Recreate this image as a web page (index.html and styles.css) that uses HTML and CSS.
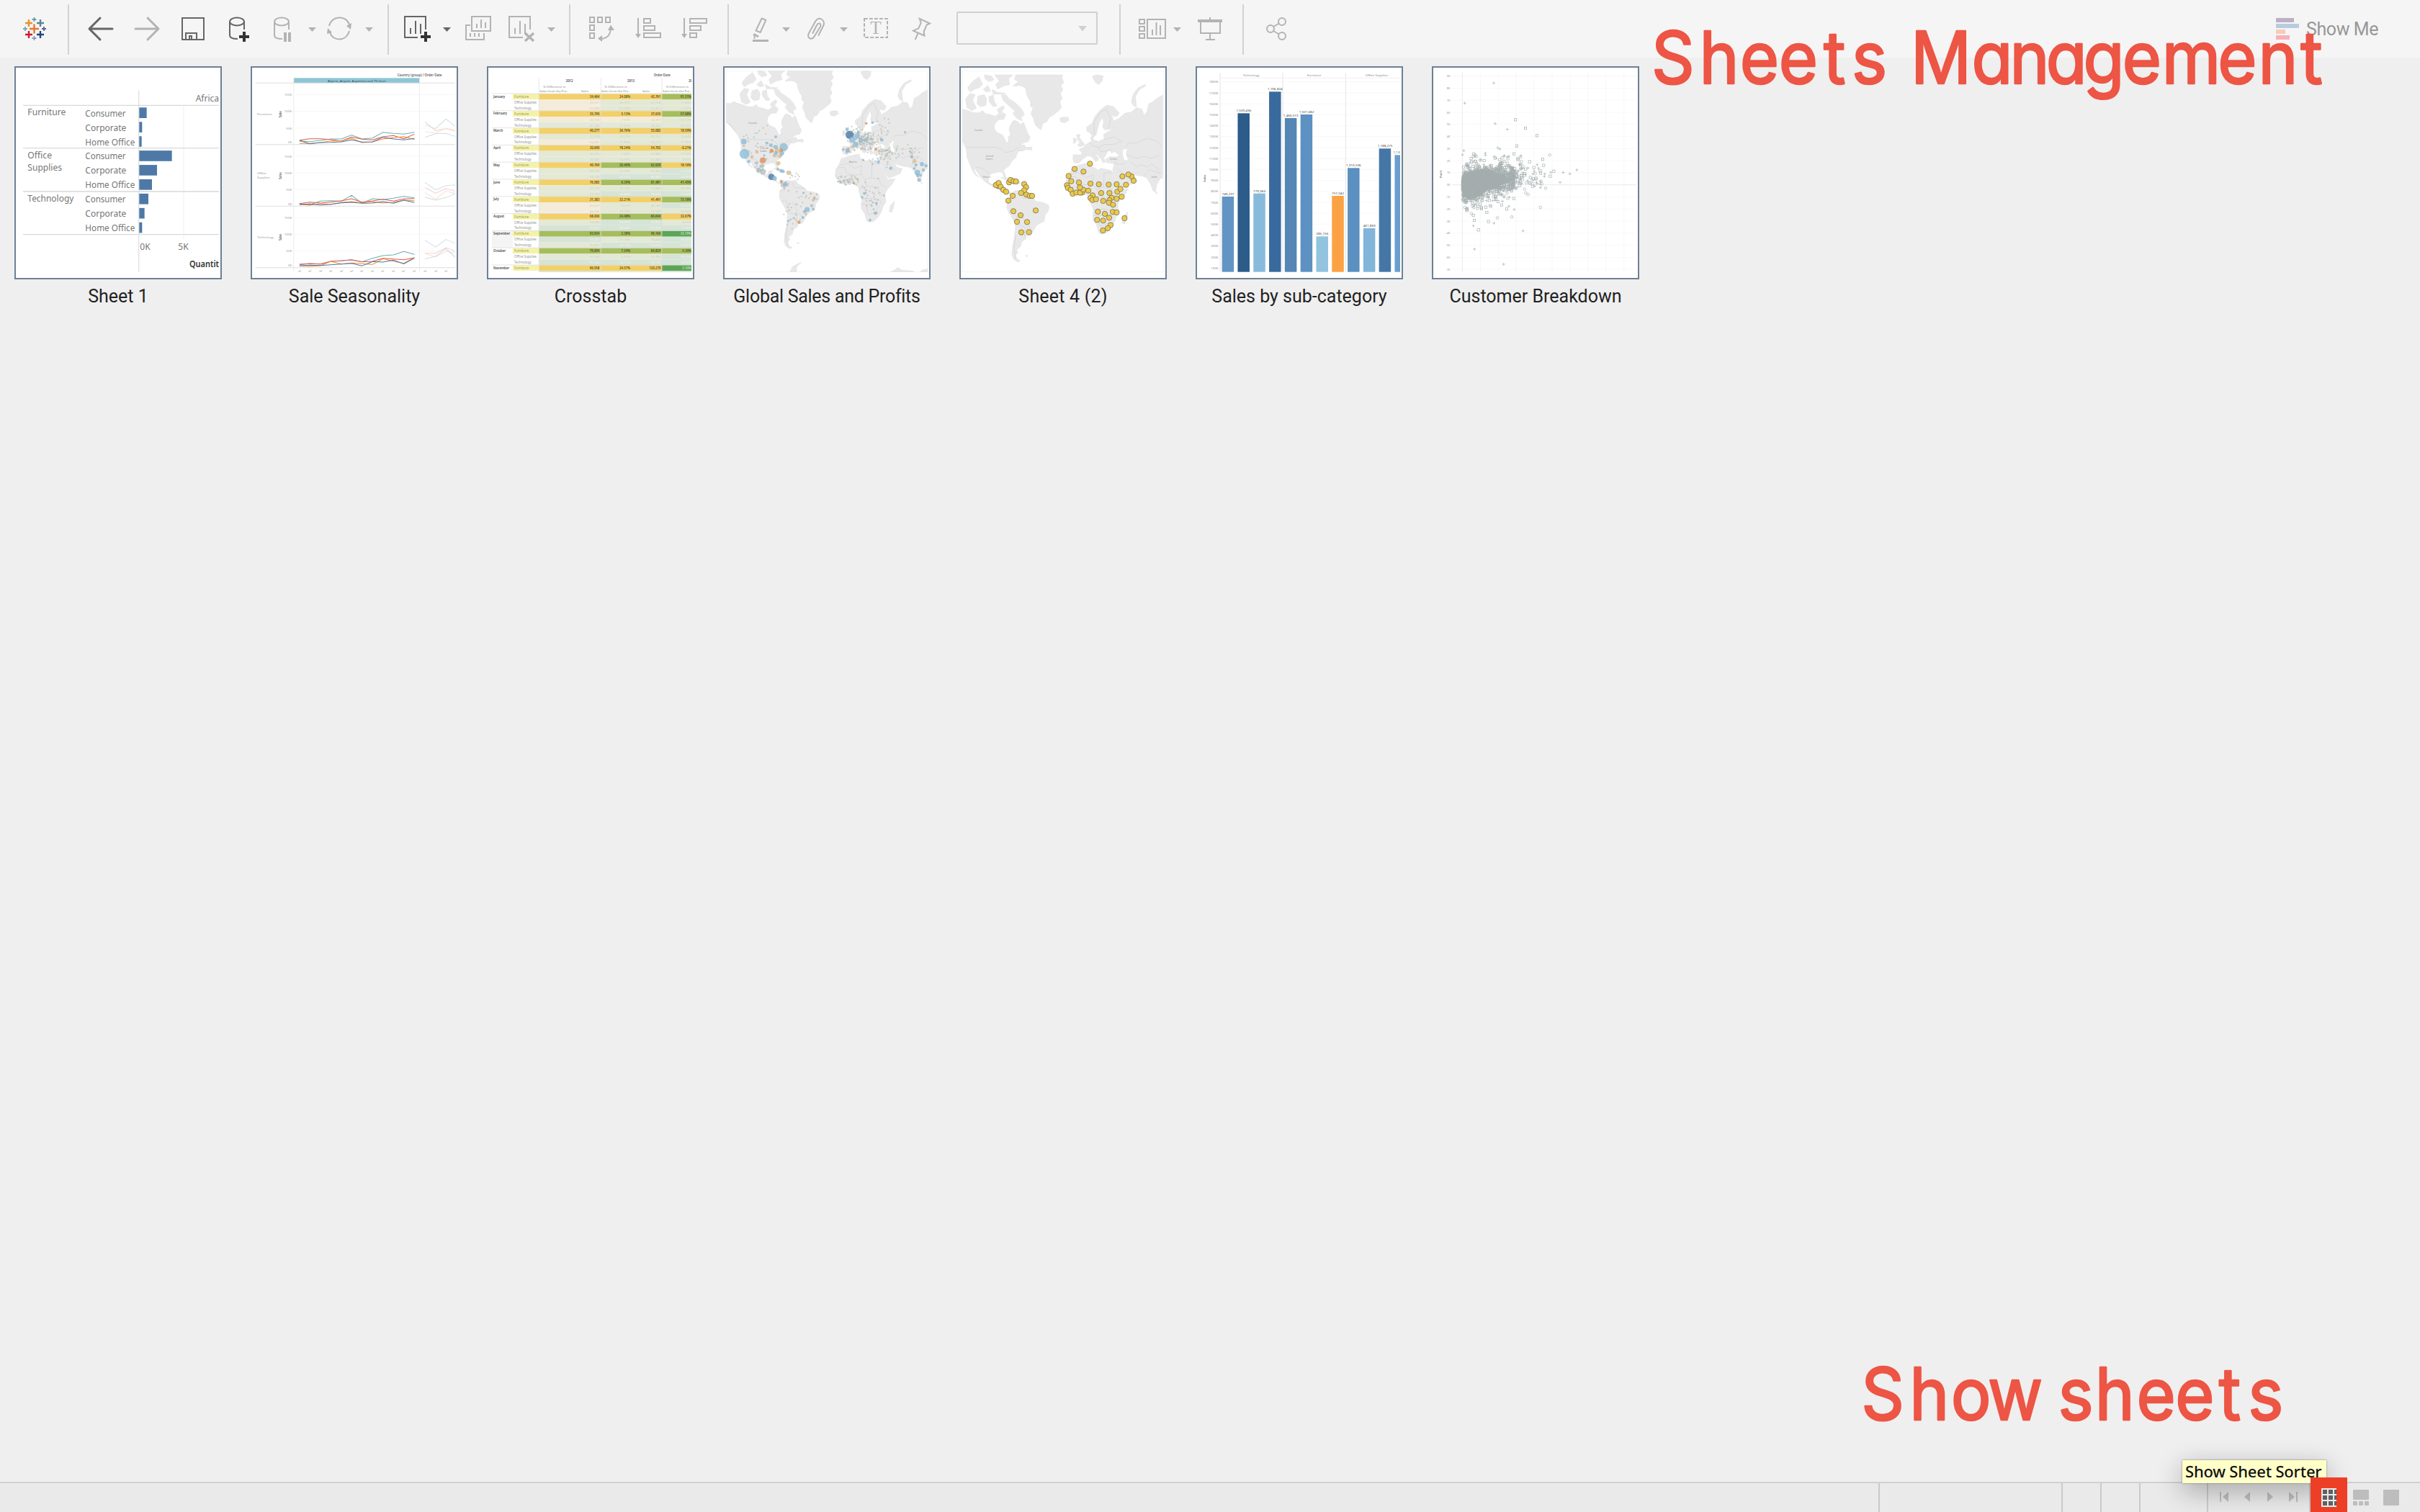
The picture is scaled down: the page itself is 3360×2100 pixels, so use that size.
FILE: index.html
```html
<!DOCTYPE html>
<html lang="en">
<head>
<meta charset="utf-8">
<title>Sheets Management</title>
<link rel="stylesheet" href="styles.css">
</head>
<body>
<div class="app">
  <header class="toolbar">
    <svg class="icon" width="34" height="80"><g fill="none" stroke-width="2.4"><path stroke="#e8762c" d="M9 40H22M15.500 33.500V46.500"/><path stroke="#e8912d" d="M3 32H13M8 27V37"/><path stroke="#59879b" d="M19 32H29M24 27V37"/><path stroke="#c72035" d="M3 48H13M8 43V53"/><path stroke="#1f457e" d="M19 48H29M24 43V53"/><g stroke-width="1.800"><path stroke="#6f9ba8" d="M12.500 27H18.500M15.500 24V30"/><path stroke="#9297ba" d="M12.500 53H18.500M15.500 50V56"/><path stroke="#7ba6b5" d="M0 40H6M3 37V43"/><path stroke="#5b6591" d="M26 40H32M29 37V43"/></g></g></svg>
    <span class="sep"></span>
    <svg class="icon dark round" width="40" height="80"><path stroke-width="3" d="M34 40H2M17 25L2 40L17 55"/></svg>
    <svg class="icon round" width="40" height="80"><path stroke-width="3" d="M2 40H34M19 25L34 40L19 55"/></svg>
    <svg class="icon dark" width="40" height="80"><path d="M1 25H31V55H1ZM6 55V46H21V55M11 55V50H14V55"/></svg>
    <svg class="icon dark" width="40" height="80"><path d="M21 41V30M1 30V49C1 53 7 54 12 54"/><ellipse cx="11" cy="30" rx="10" ry="5.500"/><path class="plus" d="M14 51H28M21 44V58"/></svg>
    <svg class="icon" width="40" height="80"><path d="M21 41V30M1 30V49C1 53 7 54 12 54"/><ellipse cx="11" cy="30" rx="10" ry="5.500"/><path stroke-width="4" d="M16 45V58M22 45V58"/></svg>
    <svg class="icon" width="12" height="80"><path class="solid" d="M0 38H11L5.500 44Z"/></svg>
    <svg class="icon" width="40" height="80"><path d="M3 36C6 22 26 20 31 34M4 45C8 58 27 58 31 43"/><path class="solid" d="M27 36L34 32L33 41ZM1 39L0 47L7 45Z"/></svg>
    <svg class="icon" width="12" height="80"><path class="solid" d="M0 38H11L5.500 44Z"/></svg>
    <span class="sep"></span>
    <svg class="icon dark" width="40" height="80"><path d="M30 41V23H1V52H19M9 39V47M16 29V47M23 33V47"/><path class="plus" d="M23 51H37M30 44V58"/></svg>
    <svg class="icon dark" width="12" height="80"><path class="solid" d="M0 38H11L5.500 44Z"/></svg>
    <svg class="icon" width="40" height="80"><path d="M9 23H35V43H9ZM7 35H1V55H26V46M16 33V39M22 27V39M28 31V39M7 46V51M13 46V51M19 46V51"/></svg>
    <svg class="icon" width="40" height="80"><path d="M30 41V23H1V52H20M9 39V47M16 29V47M23 33V47"/><path stroke-width="3.500" d="M23 46L35 57M35 46L23 57"/></svg>
    <svg class="icon" width="12" height="80"><path class="solid" d="M0 38H11L5.500 44Z"/></svg>
    <span class="sep"></span>
    <svg class="icon" width="40" height="80"><path d="M2 24H8V31H2ZM13 24H19V31H13ZM24 24H30V31H24ZM2 35H8V42H2ZM2 46H8V53H2Z"/><path d="M31 40C30 49 27 52 19 54"/><path class="solid" d="M31 34.500L36 42H27ZM13 53.500L19 49V58Z"/></svg>
    <svg class="icon" width="40" height="80"><path d="M4 25V50M12 26H21V32H12ZM12 36H27V42H12ZM12 46H35V52H12Z"/><path class="solid" d="M0 47H8L4 53Z"/></svg>
    <svg class="icon" width="40" height="80"><path d="M4 25V50M12 26H35V32H12ZM12 36H27V42H12ZM12 46H21V52H12Z"/><path class="solid" d="M0 47H8L4 53Z"/></svg>
    <span class="sep"></span>
    <svg class="icon round" width="26" height="80"><path d="M13.700 25.500L19.300 28L11.700 45L5.500 42.500Z"/><path class="solid" d="M3 46L10 50L8 52L4 50L5 53L2 54L3 51L1.500 49Z"/><path class="solid" d="M1 55H23V58H1Z"/></svg>
    <svg class="icon" width="12" height="80"><path class="solid" d="M0 38H11L5.500 44Z"/></svg>
    <svg class="icon round" width="28" height="80"><path d="M15.500 49L22.500 35C25 28 16 22 11.500 29L2 46C-1 53 6 57 10 50L18 37C20 32 15 31 13 35L7.500 46"/></svg>
    <svg class="icon" width="12" height="80"><path class="solid" d="M0 38H11L5.500 44Z"/></svg>
    <svg class="icon" width="36" height="80"><rect x="1" y="26" width="32" height="26" stroke-dasharray="4.800 2.200"/><text class="glyph" x="16.800" y="47" text-anchor="middle">T</text></svg>
    <svg class="icon" width="30" height="80"><path d="M10.700 26L25 32.500L20.700 34.500L16.700 44L17.500 49.500L2 42.700L9.300 39.300L12.700 31.700ZM8.300 46.700L4.700 55"/></svg>
    <div class="combo"><svg class="icon" width="14" height="8"><path class="solid faint" d="M0 0H12L6 7.500Z"/></svg></div>
    <span class="sep"></span>
    <svg class="icon" width="42" height="80"><path d="M2 27H9V33H2ZM2 37H9V43H2ZM2 47H9V53H2ZM13 27H38V53H13ZM20 41V49M25.500 31V49M31 35V49"/></svg>
    <svg class="icon" width="12" height="80"><path class="solid" d="M0 38H11L5.500 44Z"/></svg>
    <svg class="icon" width="36" height="80"><path d="M4 30V46H31V30M17 24V28M17 46V54M11 55H24"/><path class="solid" d="M0 27H34V31H0Z"/></svg>
    <span class="sep"></span>
    <svg class="icon" width="32" height="80"><circle cx="6" cy="40" r="5"/><circle cx="22" cy="30" r="5"/><circle cx="22" cy="50" r="5"/><path d="M10 37L18 32.500M10 43L18 47.500"/></svg>
    <div class="showme">
      <svg width="42" height="80"><path fill="#bdb0c5" d="M0 25H25V31H0Z"/><path fill="#b8cbe0" d="M0 33H32V39H0Z"/><path fill="#f6cdb4" d="M0 41H13V47H0Z"/><path fill="#f7b1ba" d="M0 49H19V55H0Z"/></svg>
      <span>Show Me</span>
    </div>
  </header>

  <main class="sorter">
    <figure class="sheet">
      <div class="thumb"><svg id="thumb-sheet1" viewBox="72 54 840 840"></svg></div>
      <figcaption>Sheet 1</figcaption>
    </figure>
    <figure class="sheet">
      <div class="thumb"><svg id="thumb-season" viewBox="1056 54 840 840"></svg></div>
      <figcaption>Sale Seasonality</figcaption>
    </figure>
    <figure class="sheet">
      <div class="thumb"><svg id="thumb-crosstab" viewBox="60 54 840 840"></svg></div>
      <figcaption>Crosstab</figcaption>
    </figure>
    <figure class="sheet">
      <div class="thumb"><svg viewBox="54 54 840 840">
        <defs>
          <g id="world">
            <g fill="#e8e8e8" stroke="#e3e3e3" stroke-width="2" stroke-linejoin="round">
              <path d="M0 165L20 178L54 190L75 192L84 183L100 190L120 195L140 203L165 205L180 196L190 208L205 210L230 218L245 208L238 192L250 182L262 176L266 186L255 200L272 212L264 230L243 232L228 248L225 265L235 282L258 292L266 305L275 324L283 318L282 300L291 290L285 272L288 258L298 240L305 234L320 240L330 252L342 242L350 262L358 284L368 300L362 318L345 322L328 334L346 332L350 342L374 340L376 352L350 350L338 356L325 355L316 366L312 382L300 392L290 405L285 415L270 425L262 435L268 445L272 462L264 458L258 441L245 438L230 442L212 446L204 462L203 480L215 488L228 485L232 474L248 470L242 488L240 498L262 500L264 518L275 524L290 519L294 526L280 527L262 516L245 508L225 500L210 490L190 478L172 460L160 440L142 420L152 446L166 460L150 450L138 430L128 405L118 380L115 350L105 325L90 305L75 288L62 275L54 268L0 230Z"/>
              <path d="M120 105L140 80L165 62L180 90L168 104L148 110L130 122ZM186 54L215 58L225 74L205 80L190 70ZM228 54H300L282 70L288 92L262 98L240 110L232 92L246 78ZM112 150L130 128L150 132L140 155L155 185L138 196L118 184ZM162 138L186 132L196 150L192 175L172 180L158 168ZM200 96L212 118L195 122L182 112ZM218 112L240 124L270 126L262 130L222 130ZM205 140L222 134L226 160L238 176L222 180L206 160ZM254 134L272 132L284 148L300 158L318 172L335 190L346 212L332 222L338 236L318 228L300 208L308 196L290 182L276 168L262 156ZM246 214L262 216L256 230L240 228Z"/>
              <path d="M312 54L306 72L322 80L300 98L330 96L350 106L354 130L362 148L370 160L370 178L380 184L372 208L382 228L388 250L398 262L411 272L420 245L434 240L444 222L462 212L484 194L492 182L486 160L496 148L488 128L498 112L490 96L502 84L494 66L498 54Z"/>
              <path d="M486 226L498 222L518 222L522 234L505 244L490 240ZM540 304L552 308L550 320L540 326ZM552 292L566 290L564 304L576 318L586 332L566 338L556 334L566 322L558 312ZM615 60L632 54L658 58L654 78L640 92L628 84ZM770 160L778 130L796 106L824 92L826 98L802 112L786 140L790 180L778 176ZM755 598L752 624L744 645L734 642L738 618ZM252 462L270 460L296 472L298 478L270 470ZM306 474L324 474L328 486L308 484ZM868 516L872 524L868 526ZM350 770L360 772L352 775Z"/>
              <path d="M294 526L310 512L325 514L345 512L352 525L370 535L385 546L390 556L420 560L442 571L442 590L428 610L424 634L395 650L385 665L372 690L352 694L352 705L336 714L330 735L315 748L320 758L310 770L316 784L330 792L318 796L303 785L296 765L300 730L306 700L310 660L310 645L296 620L284 600L276 580L278 560L286 546Z"/>
              <path d="M535 420L548 418L560 412L590 405L612 403L610 416L640 432L648 424L665 428L690 433L702 458L716 485L728 508L758 505L745 528L725 550L715 570L720 600L708 620L702 640L690 662L670 682L650 686L640 680L632 650L618 630L617 610L620 590L608 560L608 545L598 534L580 524L555 530L535 525L518 508L508 495L512 465L525 445Z"/>
              <path d="M540 370L570 372L574 362L562 350L580 342L590 330L604 322L612 318L608 300L618 298L620 312L640 318L662 308L660 290L680 278L700 268L665 272L656 262L660 240L654 222L640 250L630 292L618 302L606 284L594 278L592 262L616 244L624 220L650 190L674 174L700 180L722 205L712 220L692 214L700 238L724 224L745 206L770 202L790 184L812 190L820 215L832 200L838 170L856 160L870 148L894 134V462L884 466L870 490L866 518L856 514L846 486L830 462L815 456L790 452L768 446L752 436L768 458L788 462L780 482L750 496L732 502L716 480L700 446L696 430L702 406L672 402L668 388L690 378L704 380L722 374L704 358L692 364L680 350L668 372L660 385L668 400L656 402L650 388L636 372L620 364L638 382L640 392L628 398L612 378L596 374L580 386L560 404L544 402L538 390Z"/>
              <path fill="#fff" stroke="none" d="M736 350L754 348L748 362L756 392L742 392L736 370Z"/>
              <path d="M320 893L332 870L368 852L348 872L348 893ZM740 893L758 884L770 874L786 886L830 889L838 893ZM862 893L875 884L894 880V893Z"/>
            </g>
            <g fill="none" stroke="#d2d2d2" stroke-width="2">
              <path d="M115 341H236L256 350L270 362L300 356L316 344L330 356M54 268L75 284L92 308M155 420L178 424L200 440L206 448M275 560L300 546L312 528M330 520L340 542L382 545M284 600L300 592L316 620L312 650M330 600L350 640L372 664M318 646L350 660L345 700M312 690L304 740L312 785"/>
              <path d="M528 448L556 440L590 462L620 450L616 486L586 490L556 478L548 458L522 458M616 486L632 508L660 500L662 442H698M632 508L640 536L610 548M662 502L690 505L700 530L720 540M512 494L546 500L560 490L586 490M570 520L580 502L608 506M640 536L690 540L688 570L718 574M620 590L660 586L662 612L618 612M660 586L690 590L704 610M640 640L650 656L680 640L690 620M640 612L644 642"/>
              <path d="M622 290L622 240L650 200L670 190L688 230L680 262M665 310L700 300L730 318L700 330L660 330L640 342L618 336L604 322M640 342L650 360L690 350M745 340L760 325L800 322L830 305L866 315L894 340M750 370L790 384L820 378L850 384L880 372M770 400L790 420L810 410L832 420L850 408L880 430M700 400L722 410L748 404M720 430L740 450L760 474M822 454L840 430L866 438L890 444"/>
            </g>
          </g>
        </defs>
        <rect x="54" y="54" width="840" height="840" fill="#fff" stroke="#eee" stroke-width="3"/>
        <use href="#world"/>
        <g id="map-dots"></g>
        <text class="maplabel" x="147" y="276">Canada</text><text class="maplabel" x="196" y="382">United</text><text class="maplabel" x="196" y="392">States</text><text class="maplabel" x="566" y="439">Algeria</text>
      </svg></div>
      <figcaption class="tight">Global Sales and Profits</figcaption>
    </figure>
    <figure class="sheet">
      <div class="thumb"><svg viewBox="48 54 840 840">
        <rect x="48" y="54" width="840" height="840" fill="#fff" stroke="#eee" stroke-width="3"/>
        <use href="#world" transform="matrix(1.05 0 0 1.05 -56 15.5)"/>
        <g id="country-dots"></g>
        <text class="maplabel" x="98" y="305">Canada</text><text class="maplabel" x="146" y="415">United</text><text class="maplabel" x="146" y="426">States</text><text class="maplabel" x="134" y="500">Mexico</text><text class="maplabel" x="662" y="426">Turkey</text><text class="maplabel" x="836" y="501">India</text>
      </svg></div>
      <figcaption class="loose">Sheet 4 (2)</figcaption>
    </figure>
    <figure class="sheet">
      <div class="thumb"><svg id="thumb-bars" viewBox="72 54 840 840"></svg></div>
      <figcaption>Sales by sub-category</figcaption>
    </figure>
    <figure class="sheet">
      <div class="thumb"><svg id="thumb-scatter" viewBox="66 54 840 840"></svg></div>
      <figcaption>Customer Breakdown</figcaption>
    </figure>
  </main>

  <footer class="status">
    <span class="cell cell-main"></span><span class="cell cell-wide"></span><span class="cell cell-small"></span><span class="cell cell-small"></span><span class="cell cell-mid"></span>
    <span class="cell cell-nav"><svg width="140" height="40" fill="#bebebe"><path d="M16 12H18V26H16ZM28 12V26L20 19ZM58 12V26L50 19ZM82 12V26L90 19ZM112 12V26L120 19ZM122 12H124V26H122Z"/></svg></span>
    <span class="views"><svg width="150" height="40" fill="#bdbdbd"><rect x="59" y="9" width="22" height="14" rx="1"/><rect x="59" y="25" width="6" height="6" rx="1"/><rect x="67" y="25" width="6" height="6" rx="1"/><rect x="75" y="25" width="6" height="6" rx="1"/><rect x="101" y="9" width="22" height="22" rx="1"/></svg></span>
  </footer>
</div>

<svg class="note note-title" width="1000" height="170"><text transform="scale(.93 1)" y="92" x="14 85.500 146 204 271 313 360 401 492 549 603 658.500 717 776 859.500 920 983">Sheets Management</text></svg>
<svg class="note note-show" width="660" height="150"><text transform="scale(.93 1)" y="92" x="26 98 160 215 290 320 375 437 495 560 603.500">Show sheets</text></svg>
<div class="tooltip">Show Sheet Sorter</div>
<div class="active-view"><svg width="21" height="26"><rect width="21" height="26" fill="#eaeaea"/><path fill="#606060" d="M2 2H8V8H2ZM10 2H16V8H10ZM18 2H21V8H18ZM2 10H8V16H2ZM10 10H16V16H10ZM18 10H21V16H18ZM2 18H8V24H2ZM10 18H16V24H10ZM18 18H21V24H18Z"/></svg></div>
<script src="charts.js"></script>
</body>
</html>
```

FILE: styles.css
```css
* { box-sizing: border-box; }
body { margin: 0; background: #efefef; font-family: Roboto, "Liberation Sans", sans-serif; }
.app { display: flex; flex-direction: column; width: 3360px; height: 2100px; overflow: hidden; }

.toolbar {
  display: grid;
  height: 80px;
  flex: none;
  padding-left: 32px;
  align-items: start;
  background: #f5f5f5;
  grid-template-columns: 62px 28px 64px 66px 66px 62px 48px 26px 53px 31px 23px 54px 31px 60px 54px 30px 27px 65px 64px 64px 34px 42px 35px 45px 33px 67px 62px 226px 26px 49px 34px 62px 33px 1402px auto;
}
.icon { display: block; fill: none; stroke: #b3b3b3; stroke-width: 2; color: #b3b3b3; overflow: visible; }
.icon.dark { stroke: #666; color: #666; }
.icon.round { stroke-linecap: round; stroke-linejoin: round; }
.icon .solid { fill: currentColor; stroke: none; }
.icon .faint { fill: #d0d0d0; }
.icon .plus { stroke: #333; stroke-width: 4; }
.icon .glyph { font: 25px "Liberation Serif", serif; fill: #b3b3b3; stroke: none; }
.sep { width: 2px; height: 70px; margin-top: 6px; background: #d2d2d2; }
.combo { display: flex; width: 196px; height: 46px; margin-top: 16px; padding: 20px 11px 0 0; justify-content: flex-end; border: 2px solid #d0d0d0; border-radius: 2px; }
.combo .icon { margin-top: -2px; }
.showme { display: flex; height: 80px; align-items: center; color: #979797; font-size: 25px; letter-spacing: -.4px; white-space: nowrap; }

.sorter { display: flex; flex: 1; align-items: flex-start; gap: 40px; padding: 12px 20px; }
.sheet { display: flex; flex: none; flex-direction: column; align-items: center; width: 288px; margin: 0; }
.thumb { width: 288px; height: 296px; padding: 4px 2px; border: 2px solid #6d8095; background: #fff; }
.thumb svg { display: block; width: 280px; height: 280px; overflow: hidden; font-family: "Noto Sans", sans-serif; }
.sheet figcaption { margin-top: 8px; color: #222; font-size: 25px; line-height: 32px; white-space: nowrap; }
.sheet .tight { letter-spacing: -.28px; }
.sheet .loose { letter-spacing: .2px; }
.maplabel { font-size: 10px; fill: #999; }

.status { display: flex; height: 42px; flex: none; border-top: 2px solid #d0d0d0; background: #eaeaea; }
.cell { flex: none; height: 40px; border-right: 2px solid #cacaca; }
.cell-main { width: 2610px; }
.cell-wide { width: 254px; }
.cell-small { width: 54px; }
.cell-mid { width: 94px; }
.cell-nav { width: 142px; }
.views { flex: 1; }

.note { position: absolute; overflow: visible; fill: #ed5545; stroke: #ed5545; stroke-width: 2.6; stroke-linejoin: round; }
.note text { font-family: "Comic Sans MS", Inter, sans-serif; font-size: 100px; font-feature-settings: "cv11" 1; }
.note-title { left: 2280px; top: 24px; }
.note-show { left: 2560px; top: 1880px; }
.tooltip { position: absolute; left: 3030px; top: 2028px; width: 200px; height: 32px; padding-left: 4px; background: #ffffc8; color: #111; font: 500 22px/31px "Noto Sans", sans-serif; letter-spacing: -.2px; white-space: nowrap; box-shadow: 0 0 2px rgba(0,0,0,.45), 0 10px 36px rgba(0,0,0,.32); }
.active-view { position: absolute; left: 3208px; top: 2052px; width: 51px; height: 48px; padding: 15px; background: #ed3f26; }
.active-view svg { display: block; }
```

FILE: charts.js
```js
const NS = 'http://www.w3.org/2000/svg';
const byId = id => document.getElementById(id);

function add(parent, tag, attrs, text) {
  const el = document.createElementNS(NS, tag);
  for (const k in attrs) el.setAttribute(k, attrs[k]);
  if (text !== undefined) el.textContent = text;
  parent.appendChild(el);
  return el;
}
const rect = (p, x, y, w, h, fill) => add(p, 'rect', { x, y, width: w, height: h, fill });
const line = (p, d, stroke, w = 2) => add(p, 'path', { d, stroke, 'stroke-width': w, fill: 'none' });
function label(p, text, x, y, size, fill, opt = {}) {
  return add(p, 'text', Object.assign({ x, y, 'font-size': size, fill }, opt), text);
}
const fit = w => ({ textLength: w, lengthAdjust: 'spacingAndGlyphs' });
const end = { 'text-anchor': 'end' };
const mid = { 'text-anchor': 'middle' };

// Sheet 1: quantity by category and segment
(function () {
  const s = byId('thumb-sheet1');
  line(s, 'M765 200V755', '#f0f0f0', 3);
  line(s, 'M96 199H912M96 377H912M96 558H912M96 737H912', '#d9d9d9', 4);
  line(s, 'M578 136V893', '#e0e0e0', 4);
  const c = '#767676';
  label(s, 'Africa', 815, 184, 37, c, fit(97));
  label(s, 'Furniture', 115, 241, 36, c, fit(159));
  label(s, 'Office', 115, 420, 36, c, fit(101));
  label(s, 'Supplies', 115, 471, 36, c, fit(143));
  label(s, 'Technology', 115, 601, 36, c, fit(192));
  const seg = [['Consumer', 169], ['Corporate', 171], ['Home Office', 207]];
  [31, 12, 10, 136, 74, 53, 38, 22, 12].forEach((w, i) => {
    const y = 208 + i * 59.8;
    label(s, seg[i % 3][0], 355, y + 37, 36, c, fit(seg[i % 3][1]));
    rect(s, 580, y, w, 44, '#4e79a7');
  });
  label(s, '0K', 583, 801, 36, c, fit(43));
  label(s, '5K', 742, 801, 36, c, fit(43));
  label(s, 'Quantity', 789, 873, 36, '#333', Object.assign({ 'font-weight': 600 }, fit(141)));
})();

// Sale seasonality: three panes of monthly lines
(function () {
  const s = add(byId('thumb-season'), 'g', { transform: 'scale(1.2627 1)' });
  rect(s, 969, 85, 415, 21, '#8fc6d4');
  label(s, 'Country (group) / Order Date', 1311, 79, 13, '#444', Object.assign({ 'font-weight': 500 }, fit(146)));
  label(s, 'Algeria, Angola, Argentina and 79 more', 1081, 101, 13, '#345', fit(192));
  line(s, 'M842 106H1510M842 362H1510M842 619H1510M842 875H1510', '#dedede', 3);
  line(s, 'M969 85V893M1384 85V893', '#e6e6e6');
  [['Furniture', 240], ['Technology', 752]].forEach(a => label(s, a[0], 848, a[1], 12, '#999', fit(a[0].length * 5.5)));
  label(s, 'Office', 848, 487, 12, '#999', fit(30));
  label(s, 'Supplies', 848, 504, 12, '#999', fit(42));
  for (let p = 0; p < 3; p++) {
    const o = p * 256;
    [['150K', 155], ['100K', 224], ['50K', 294], ['0K', 353]].forEach(t => {
      label(s, t[0], 963, t[1] + o + 5, 12, '#999', Object.assign({}, end, fit(t[0].length * 6.3)));
      if (t[0] !== '0K') line(s, `M970 ${t[1] + o}H1510`, '#f4f4f4');
    });
    label(s, 'Sales', 0, 0, 11, '#555', { transform: `translate(930 ${250 + o}) rotate(-90)`, 'font-weight': 600 });
  }
  const X = [988, 1022, 1057, 1091, 1126, 1160, 1194, 1229, 1263, 1298, 1332, 1367];
  const col = ['#6bb2ad', '#e15759', '#f28e2b', '#4e79a7'];
  const data = [
    [[348, 350, 345, 339, 339, 323, 339, 335, 311, 316, 319, 311], [344, 338, 338, 341, 348, 331, 340, 343, 330, 325, 338, 319], [358, 358, 354, 347, 347, 336, 354, 351, 339, 334, 329, 341], [345, 359, 354, 353, 351, 343, 352, 351, 332, 339, 343, 337]],
    [[611, 613, 598, 596, 598, 574, 606, 588, 592, 586, 578, 584], [608, 602, 606, 602, 597, 588, 602, 597, 590, 598, 589, 587], [611, 615, 608, 612, 603, 600, 605, 601, 606, 603, 594, 596], [612, 610, 614, 611, 605, 603, 607, 606, 600, 607, 594, 604]],
    [[860, 859, 860, 849, 846, 843, 851, 836, 825, 822, 808, 820], [863, 858, 860, 849, 847, 842, 851, 849, 836, 839, 842, 834], [868, 870, 867, 849, 860, 856, 859, 862, 838, 848, 857, 833], [868, 865, 866, 863, 860, 857, 868, 850, 852, 844, 859, 836]]
  ];
  const more = [
    [[280, 296, 256, 290], [268, 304, 296, 308], [308, 315, 295, 304], [332, 317, 316, 330]],
    [[520, 551, 534, 530], [541, 565, 546, 558], [563, 590, 556, 568], [581, 594, 583, 566]],
    [[760, 790, 758, 776], [815, 815, 792, 808], [817, 830, 808, 814], [839, 828, 796, 836]]
  ];
  const pale = ['#d5e3e2', '#f3d3d6', '#f7e3cf', '#d3dde8'];
  data.forEach(p => p.forEach((l, i) => add(s, 'polyline', { points: l.map((y, k) => X[k] + ',' + y).join(' '), fill: 'none', stroke: col[i], 'stroke-width': 3 })));
  more.forEach(p => p.forEach((l, i) => add(s, 'polyline', { points: l.map((y, k) => (1402 + k * 34.5) + ',' + y).join(' '), fill: 'none', stroke: pale[i], 'stroke-width': 3 })));
  X.concat([1403, 1437, 1471]).forEach(x => label(s, 'Y.', 0, 0, 11, '#888', { transform: `translate(${x + 4} 893) rotate(-90)` }));
})();

// Crosstab
(function () {
  const s = byId('thumb-crosstab');
  const C = { y: '#f3d067', g: '#a5bd5b', d: '#5ba556', p: '#f4ecda', l: '#e4e9d6', t: '#d6e4d7' };
  const months = ['January', 'February', 'March', 'April', 'May', 'June', 'July', 'August', 'September', 'October', 'November'];
  const rows = [
    'y y g|34,464|24.08%|42,761|91.31%', 'p l l|33,527|40.97%|47,264|37.49%', 'p l l|30,908|53.39%|47,411|10.52%',
    'y y g|35,799|5.13%|37,635|57.08%', 'p p l|26,135|-7.03%|24,297|112.17%', 'l l l|41,784|-11.63%|36,922|55.21%',
    'y y y|40,277|36.76%|55,082|18.59%', 'l l l|31,579|70.12%|53,721|15.43%', 'p l l|64,891|-15.85%|54,273|31.30%',
    'y y y|30,690|78.24%|54,702|-0.21%', 'l l l|45,563|-3.68%|43,886|27.07%', 'l l l|38,085|64.89%|62,464|8.01%',
    'y g y|49,769|26.46%|62,939|18.16%', 'l l t|49,731|22.79%|61,063|22.42%', 'l t t|58,728|43.61%|84,363|32.02%',
    'y g g|76,585|6.39%|81,481|41.45%', 'l l l|61,793|22.74%|75,846|46.99%', 'l t t|69,194|42.84%|98,843|71.76%',
    'y y g|31,383|32.21%|41,491|73.18%', 'p l t|42,607|8.27%|46,346|53.02%', 'p l l|44,245|29.73%|57,399|52.94%',
    'y g y|68,000|24.48%|84,644|32.67%', 'l t l|58,980|65.97%|97,863|-4.29%', 't t t|81,673|48.44%|121,235|0.16%',
    'g g d|93,934|2.38%|96,166|32.79%', 't l t|99,892|-21.16%|78,844|40.48%', 'l t t|90,667|26.15%|114,379|27.79%',
    'g g g|79,094|7.24%|84,824|5.30%', 'l l t|55,700|6.61%|59,383|38.33%', 't t t|81,300|33.71%|108,733|16.52%',
    'y y d|96,558|24.57%|120,279|2.10%', 't l t||||'
  ];
  rect(s, 69, 722, 87, 70, '#f4f4f4');
  rows.forEach((r, i) => {
    const a = r.split('|'), k = a[0].split(' '), y = 151 + i * 23.8, f = i % 3 === 0;
    rect(s, 265, y, 258, 23.9, C[k[0]]);
    rect(s, 523, y, 254, 23.9, C[k[1]]);
    rect(s, 777, y, 126, 23.9, C[k[2]]);
    if (i === 31) return;
    if (f) {
      rect(s, 156, y, 108, 23, '#f5f2a8');
      line(s, `M69 ${y - 1}H903`, '#d8d8d0');
      label(s, months[i / 3], 75, y + 16, 13, '#444', { 'font-weight': 600 });
    }
    label(s, ['Furniture', 'Office Supplies', 'Technology'][i % 3], 162, y + 17, 13.5, f ? '#98985c' : '#929292', fit([60, 93, 71][i % 3]));
    [517, 645, 772, 899].forEach((x, j) => {
      const bg = k[[0, 1, 1, 2][j]];
      label(s, a[j + 1], x, y + 16.5, 13, f ? (bg === 'd' ? '#bfe0bc' : '#554e28') : (bg === 't' ? '#eef5ee' : '#cdcec4'), Object.assign({ 'font-weight': f ? 600 : 400 }, end));
    });
  });
  line(s, 'M265 84V893M523 84V893M777 84V893', '#dcdcdc');
  label(s, 'Order Date', 743, 79, 13, '#555', Object.assign({ 'font-weight': 600 }, fit(69)));
  label(s, '2012', 377, 101, 13, '#444', { 'font-weight': 600 });
  label(s, '2013', 633, 101, 13, '#444', { 'font-weight': 600 });
  label(s, '2014', 889, 101, 13, '#444', { 'font-weight': 600 });
  [268, 524, 780].forEach(x => {
    label(s, '% Difference in', x + 14, 127, 13, '#888', fit(94));
    label(s, 'Sales from the Pre..', x, 145, 13, '#888', fit(119));
  });
  label(s, 'Sales', 440, 145, 13, '#888');
  label(s, 'Sales', 695, 145, 13, '#888');
})();

// Seeded generator so the point clouds are stable between loads
let seed = 11;
const rnd = () => (seed = (seed * 16807) % 2147483647) / 2147483647;
const gauss = () => rnd() + rnd() + rnd() - 1.5;

// City bubbles
(function () {
  const g = byId('map-dots');
  const small = [[640, 345, 60, 40, 110], [600, 320, 35, 30, 30], [560, 388, 25, 14, 22], [730, 395, 40, 25, 40], [560, 512, 45, 16, 42], [810, 400, 50, 40, 22], [710, 300, 30, 50, 14], [660, 560, 50, 50, 24], [300, 530, 20, 20, 24], [345, 600, 60, 50, 16], [335, 675, 30, 40, 14], [195, 465, 22, 14, 24], [240, 395, 50, 45, 24], [160, 370, 40, 50, 12], [690, 430, 50, 25, 16], [430, 580, 10, 18, 9], [665, 625, 30, 30, 12], [340, 495, 20, 15, 8], [200, 300, 90, 30, 6]];
  small.forEach(([x, y, w, h, n]) => {
    for (let i = 0; i < n; i++) add(g, 'circle', { cx: (x + gauss() * w).toFixed(1), cy: (y + gauss() * h).toFixed(1), r: 2.6, fill: rnd() > .12 ? '#bcc8c8' : '#eec48c', stroke: '#9aa3a3', 'stroke-width': 1, opacity: .7 });
  });
  const B = '#8fbfdc', O = '#f5bd75', R = '#ee8f4e', D = '#4f7ba8', G = '#b9c4c0';
  [[131, 401, 20, B], [128, 350, 11, B], [128, 368, 4, O], [183, 393, 6, O], [162, 413, 6, O], [149, 433, 6, B], [207, 428, 12, R], [205, 451, 7, G], [208, 476, 11, G], [190, 470, 7, G], [181, 439, 6, G], [244, 388, 8, R], [241, 365, 7, B], [225, 356, 5, B], [261, 330, 5, B], [262, 373, 8, B], [294, 373, 16, B], [286, 398, 9, B], [268, 388, 9, O], [284, 386, 7, R], [255, 408, 6, O], [278, 409, 6, O], [261, 397, 7, B], [272, 440, 8, O], [213, 408, 4, B], [243, 497, 13, D], [256, 503, 9, B], [284, 472, 7, B], [292, 474, 6, B], [270, 465, 5, B], [315, 480, 8, O], [284, 516, 6, R], [299, 526, 7, B], [392, 633, 10, B], [381, 642, 6, B], [387, 653, 4, O], [411, 617, 6, G], [417, 594, 5, O], [407, 567, 4, O], [374, 666, 5, B], [358, 686, 6, R], [314, 681, 4, B], [417, 631, 5, B], [377, 564, 4, B],
   [569, 322, 17, D], [580, 342, 12, B], [594, 362, 11, B], [600, 326, 10, B], [615, 342, 8, B], [558, 299, 6, B], [560, 386, 8, B], [581, 371, 6, O], [632, 345, 6, B], [606, 313, 6, B], [638, 274, 5, R], [664, 271, 5, B], [678, 381, 6, R], [692, 389, 4, O], [703, 343, 6, B], [689, 435, 6, B], [740, 461, 6, B], [625, 427, 4, B], [618, 380, 4, O], [603, 508, 4, O], [587, 524, 4, R], [630, 566, 5, B], [622, 583, 4, B], [680, 607, 5, B], [676, 649, 6, B], [654, 677, 5, B], [839, 430, 7, O], [828, 413, 6, B], [845, 447, 6, B], [870, 444, 8, B], [887, 451, 6, B], [876, 468, 6, B], [851, 479, 11, B], [838, 462, 5, B], [853, 492, 6, B], [858, 510, 7, B], [800, 311, 4, B], [865, 490, 5, B]
  ].forEach(([cx, cy, r, fill]) => add(g, 'circle', { cx, cy, r, fill, stroke: '#8aa0ae', 'stroke-width': 1, opacity: .82 }));
})();

// Country points
(function () {
  const g = byId('country-dots');
  [[198, 535], [188, 531], [200, 523], [208, 538], [219, 551], [231, 559], [243, 520], [249, 510], [262, 515], [272, 516], [306, 527], [314, 540], [306, 553], [293, 564], [258, 576], [240, 596], [315, 571], [329, 576], [339, 576], [261, 640], [291, 657], [276, 684], [318, 685], [354, 637], [294, 728], [326, 727],
   [580, 442], [516, 464], [553, 475], [491, 493], [502, 515], [534, 520], [582, 525], [617, 528], [658, 529], [691, 528], [730, 530], [715, 495], [753, 495], [740, 487], [762, 513], [484, 532], [488, 543], [500, 551], [508, 567], [523, 562], [548, 562], [539, 563], [552, 550], [538, 541], [573, 554], [591, 574], [582, 585], [590, 593], [605, 590], [627, 564], [661, 564], [694, 559], [707, 547], [712, 580], [691, 588], [670, 584], [635, 597], [661, 594], [659, 605], [676, 613], [613, 642], [642, 651], [675, 643], [691, 645], [660, 667], [610, 676], [635, 679], [724, 669], [666, 698], [654, 711], [634, 720]
  ].forEach(([cx, cy]) => add(g, 'circle', { cx, cy, r: 11, fill: '#edc948', stroke: '#77745c', 'stroke-width': 2.5 }));
})();

// Sales by sub-category
(function () {
  const s = byId('thumb-bars');
  for (let i = 0; i < 18; i++) {
    const y = 101 + i * 45.6;
    line(s, `M163 ${y}H912`, '#f5f5f5');
    label(s, (1800 - i * 100) + 'K', 154, y + 5, 13, '#8a8a8a', end);
  }
  line(s, 'M162 64V893M423 64V893M685 64V893', '#e4e4e4', 3);
  line(s, 'M162 85H912', '#e8e8e8');
  label(s, 'Technology', 257, 79, 13, '#888', fit(70));
  label(s, 'Furniture', 524, 79, 13, '#888', fit(59));
  label(s, 'Office Supplies', 768, 79, 13, '#888', fit(93));
  label(s, 'Sales', 0, 0, 12, '#444', { transform: 'translate(102 518) rotate(-90)', 'font-weight': 500 });
  [[579, '749,237', '#6295c4'], [232, '1,509,436', '#2b5c8a'], [566, '779,060', '#88bbdb'], [142, '1,706,824', '#386a9d'], [252, '1,466,572', '#5586b4'], [237, '1,501,682', '#5c91c2'], [745, '385,156', '#92c3df'], [576, '757,042', '#fba244'], [460, '1,010,536', '#5b90c0'], [711, '461,869', '#82b5d9'], [379, '1,188,275', '#4577a6'], [406, '1,126,813', '#6a9fcd']
  ].forEach(([y, t, c], i) => {
    const x = 170 + i * 65.4;
    rect(s, x, y, 49.5, 893 - y, c);
    label(s, t, x + 25, y - 6, 13, '#444', Object.assign({}, mid, fit(t.length > 8 ? 62 : 51)));
  });
})();

// Customer breakdown
(function () {
  const s = byId('thumb-scatter');
  for (let i = 0; i < 17; i++) {
    const y = 77 + i * 50.35;
    line(s, `M138 ${y}H906`, i === 9 ? '#dcdcdc' : '#f4f4f4');
    label(s, (9 - i) + 'K', 131, y + 4.5, 12.5, '#999', end);
  }
  for (let i = 0; i < 10; i++) line(s, `M${181 + i * 74.8} 62V893`, i ? '#f4f4f4' : '#e2e2e2');
  label(s, 'Profit', 0, 0, 11, '#555', { transform: 'translate(96 500) rotate(-90)', 'font-weight': 600 });
  const g = add(s, 'g', { fill: 'none', stroke: '#a5adad', 'stroke-width': 2 });
  const mark = (t, x, y) => {
    if (t === 'o') add(g, 'circle', { cx: x, cy: y, r: 5.5 });
    else if (t === 's') add(g, 'rect', { x: x - 5, y: y - 5, width: 10, height: 10 });
    else add(g, 'path', { d: `M${x - 6} ${y}h12M${x} ${y - 6}v12` });
  };
  add(g, 'path', { fill: '#a5adad', d: 'M177 515L184 492L202 478L235 470L262 464L300 470L330 482L355 488L372 500L368 520L340 530L318 545L280 552L262 572L236 584L220 590L200 586L186 576L177 550Z' });
  for (let i = 0; i < 950; i++) {
    const r = Math.pow(rnd(), 1.5), x = 184 + r * 215;
    const h = x < 195 ? 66 : 92 - r * 26;
    mark('osp'[Math.floor(rnd() * 3)], +x.toFixed(1), +(530 - r * 28 + gauss() * h).toFixed(1));
  }
  for (let i = 0; i < 110; i++) mark('osp'[Math.floor(rnd() * 3)], +(335 + rnd() * 100).toFixed(1), +(497 + gauss() * 60).toFixed(1));
  for (let i = 0; i < 32; i++) mark('osp'[Math.floor(rnd() * 3)], +(440 + rnd() * 85).toFixed(1), +(494 + gauss() * 42).toFixed(1));
  [['p', 312, 106], ['p', 191, 190], ['s', 402, 259], ['p', 318, 275], ['s', 444, 294], ['p', 368, 299], ['s', 492, 325], ['s', 408, 368], ['p', 329, 376], ['p', 337, 381], ['p', 187, 388], ['p', 182, 405], ['s', 229, 401], ['p', 277, 398], ['p', 277, 406], ['s', 235, 432], ['s', 272, 429], ['p', 314, 412], ['p', 322, 419], ['o', 346, 418], ['s', 337, 426], ['p', 356, 408], ['p', 368, 414], ['p', 375, 411], ['s', 396, 401], ['o', 423, 414], ['p', 425, 409], ['o', 545, 406], ['s', 516, 424], ['s', 461, 434], ['p', 493, 446], ['s', 479, 458], ['p', 658, 468], ['s', 562, 473], ['p', 601, 479], ['p', 629, 484], ['p', 588, 520], ['p', 550, 478], ['s', 547, 494], ['o', 528, 544], ['p', 507, 542], ['o', 506, 624], ['o', 455, 570], ['o', 445, 564], ['o', 440, 548], ['p', 375, 619], ['p', 397, 633], ['s', 366, 631], ['o', 387, 664], ['o', 327, 668], ['p', 313, 690], ['s', 290, 683], ['s', 283, 645], ['s', 279, 623], ['o', 300, 619], ['o', 191, 624], ['o', 244, 629], ['o', 229, 624], ['o', 219, 650], ['s', 227, 657], ['s', 231, 678], ['p', 227, 701], ['s', 248, 718], ['p', 434, 722], ['p', 232, 798], ['p', 353, 861], ['o', 182, 590], ['s', 192, 602], ['s', 260, 624], ['p', 318, 594], ['p', 308, 596]
  ].forEach(m => mark(...m));
})();
```
